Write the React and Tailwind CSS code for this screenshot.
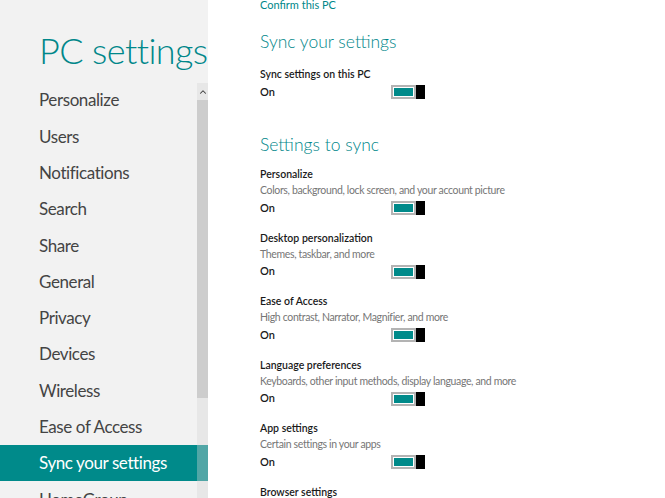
import { ChevronUp, ChevronDown } from "lucide-react";

const navItems = [
  "Personalize",
  "Users",
  "Notifications",
  "Search",
  "Share",
  "General",
  "Privacy",
  "Devices",
  "Wireless",
  "Ease of Access",
  "Sync your settings",
  "HomeGroup",
];

const syncItems = [
  { title: "Personalize", desc: "Colors, background, lock screen, and your account picture" },
  { title: "Desktop personalization", desc: "Themes, taskbar, and more" },
  { title: "Ease of Access", desc: "High contrast, Narrator, Magnifier, and more" },
  { title: "Language preferences", desc: "Keyboards, other input methods, display language, and more" },
  { title: "App settings", desc: "Certain settings in your apps" },
];

function Toggle() {
  return (
    <div className="flex h-[14px] w-[34px]">
      <div className="flex-1 border-2 border-[#b3b3b3] bg-white p-px">
        <div className="h-full w-full bg-[#008a8a]" />
      </div>
      <div className="w-[9px] bg-black" />
    </div>
  );
}

function OnRow() {
  return (
    <div className="mt-[1.5px] flex h-[17px] items-center">
      <span className="w-[131px] text-[11px] font-semibold text-[#1a1a1a]">On</span>
      <Toggle />
    </div>
  );
}

export default function App() {
  return (
    <div
      className="flex h-[498px] w-[665px] overflow-hidden bg-white"
      style={{ fontFamily: 'Lato, "Open Sans", sans-serif' }}
    >
      {/* Sidebar */}
      <div className="flex w-[208px] shrink-0 flex-col bg-[#f2f2f2]">
        <div className="h-[82px] shrink-0 pl-[39px] pt-[30px]">
          <h1 className="whitespace-nowrap text-[36px] font-light leading-[40px] tracking-[-0.6px] text-[#00878a]">
            PC settings
          </h1>
        </div>
        <div className="relative flex-1">
          <ul>
            {navItems.map((item) => (
              <li
                key={item}
                className={
                  "flex h-[36.3px] items-center pl-[39px] text-[17px] tracking-[-0.4px] " +
                  (item === "Sync your settings"
                    ? "bg-[#008a8a] text-white"
                    : "text-[#444444]")
                }
              >
                <span>{item}</span>
              </li>
            ))}
          </ul>
          {/* scrollbar */}
          <div className="absolute bottom-0 right-0 top-px flex w-[11px] flex-col bg-[rgba(213,213,213,0.38)]">
            <div className="flex h-[17px] items-center justify-center text-[#3a3a3a]">
              <ChevronUp size={10} strokeWidth={2.5} />
            </div>
            <div className="h-[298px] bg-[#cdcdcd]" />
            <div className="flex-1" />
            <div className="flex h-[15px] items-center justify-center text-[#3a3a3a]">
              <ChevronDown size={10} strokeWidth={2.5} />
            </div>
          </div>
        </div>
      </div>

      {/* Content */}
      <div className="flex-1 pl-[52px]">
        <div className="mt-[-2px] text-[11px] leading-[14px] text-[#00878a]">Confirm this PC</div>

        <h2 className="mt-[18px] text-[17.5px] font-light leading-[24px] text-[#00878a]">
          Sync your settings
        </h2>
        <div className="mt-[12px] text-[10.5px] font-semibold leading-[16px] text-[#1a1a1a]">
          Sync settings on this PC
        </div>
        <OnRow />

        <h2 className="mt-[32.5px] text-[17.5px] font-light leading-[24px] text-[#00878a]">
          Settings to sync
        </h2>

        <div className="mt-[9px] flex flex-col gap-[13px]">
          {syncItems.map((s) => (
            <div key={s.title}>
              <div className="text-[10.5px] font-semibold leading-[16px] text-[#1a1a1a]">{s.title}</div>
              <div className="text-[10.5px] leading-[16px] tracking-[-0.35px] text-[#767676]">{s.desc}</div>
              <OnRow />
            </div>
          ))}
          <div className="text-[10.5px] font-semibold leading-[16px] text-[#1a1a1a]">
            Browser settings
          </div>
        </div>
      </div>
    </div>
  );
}
